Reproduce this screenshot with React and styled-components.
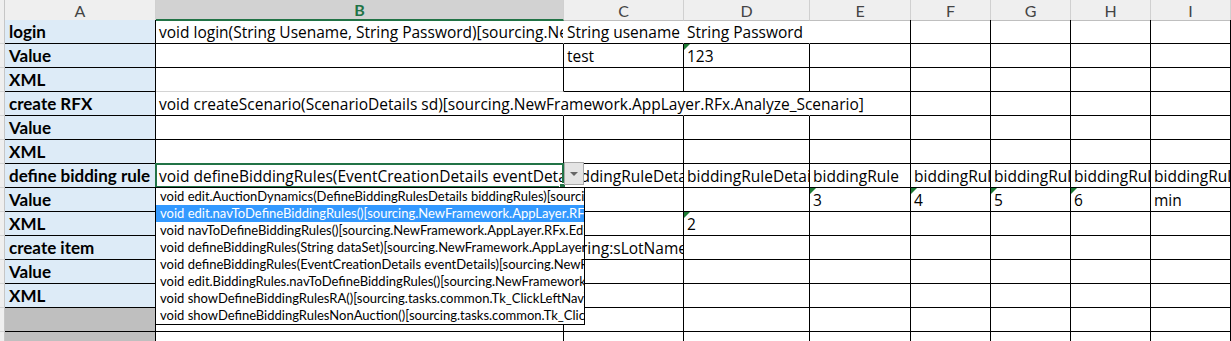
import React from 'react';
import styled, { createGlobalStyle, css } from 'styled-components';

const GlobalStyle = createGlobalStyle`
  html, body {
    margin: 0;
    padding: 0;
    background: #fff;
  }
  body {
    font-family: "Open Sans", "Liberation Sans", sans-serif;
    overflow: hidden;
  }
`;

const COLS = '5px 151px 408px 120px 126px 101px 80px 80px 80px 80px';
const LETTERS = ['A', 'B', 'C', 'D', 'E', 'F', 'G', 'H', 'I'];

const Sheet = styled.div`
    position: relative;
    width: 1231px;
    height: 341px;
    overflow: hidden;
    font-family: "Open Sans", "Liberation Sans", sans-serif;
`;

const Row = styled.div`
    display: grid;
    grid-template-columns: ${COLS};
    height: ${props => props.$h}px;
`;

const Corner = styled.div`
    box-sizing: border-box;
    background: #efefef;
    border-right: 1px solid #c6c6c6;
    border-bottom: 1px solid #bfbfbf;
`;

const ColHead = styled.div`
    box-sizing: border-box;
    display: flex;
    align-items: center;
    justify-content: center;
    font-family: Lato, sans-serif;
    font-size: 16px;
    background: ${props => props.$active ? '#d2d2d2' : '#efefef'};
    color: ${props => props.$active ? '#217346' : '#444'};
    font-weight: ${props => props.$active ? 700 : 400};
    border-right: 1px solid #d0d0d0;
    border-bottom: ${props => props.$active ? '2px solid #217346' : '1px solid #bfbfbf'};
`;

const RowHead = styled.div`
    box-sizing: border-box;
    background: #efefef;
    border-right: 1px solid #c6c6c6;
    border-bottom: 1px solid #d4d4d4;
`;

const Cell = styled.div`
    box-sizing: border-box;
    position: relative;
    display: flex;
    align-items: flex-end;
    padding: 0 3px 2px;
    font-size: 15.5px;
    line-height: 18px;
    color: #000;
    white-space: nowrap;
    overflow: ${props => props.$clip ? 'hidden' : 'visible'};
    background: ${props => props.$fill || 'transparent'};
    border-right: 1px solid ${props => props.$noRight ? 'transparent' : '#000'};
    border-bottom: 1px solid ${props => props.$bottom || '#000'};

    ${props => props.$bold && css`
        font-family: Lato, sans-serif;
        font-weight: 700;
        font-size: 17px;
        padding-left: 4px;
    `}

    ${props => props.$flag && css`
        &::before {
            content: '';
            position: absolute;
            left: 0;
            top: 0;
            border-top: 6px solid #1e7b34;
            border-right: 6px solid transparent;
        }
    `}
`;

const Selection = styled.div`
    position: absolute;
    left: 155px;
    top: 163px;
    width: 409px;
    height: 25px;
    box-sizing: border-box;
    border: 2px solid #217346;
    z-index: 3;

    &::after {
        content: '';
        position: absolute;
        right: -4px;
        bottom: -4px;
        width: 5px;
        height: 5px;
        background: #217346;
        border: 1px solid #fff;
    }
`;

const DropButton = styled.div`
    position: absolute;
    left: 564px;
    top: 162px;
    width: 20px;
    height: 23px;
    box-sizing: border-box;
    background: #e4e4e4;
    border: 1px solid #a9a9a9;
    display: flex;
    align-items: center;
    justify-content: center;
    z-index: 4;

    &::before {
        content: '';
        border-top: 4px solid #666;
        border-left: 4px solid transparent;
        border-right: 4px solid transparent;
    }
`;

const DropList = styled.div`
    position: absolute;
    left: 155px;
    top: 187px;
    width: 430px;
    height: 138px;
    box-sizing: border-box;
    background: #fff;
    border: 1px solid #000;
    overflow: hidden;
    z-index: 5;
`;

const DropItem = styled.div`
    height: 17px;
    line-height: 17px;
    padding-left: 4px;
    font-family: Lato, sans-serif;
    font-size: 13px;
    white-space: nowrap;
    overflow: hidden;
    background: ${props => props.$active ? '#3399ff' : 'transparent'};
    color: ${props => props.$active ? '#fff' : '#000'};
`;

const BLUE = '#ddebf7';
const GRAY = '#bfbfbf';

const blank = () => ({});
const blanks = n => Array.from({ length: n }, blank);

const rows = [
    { label: 'login', cells: [
        { text: 'void login(String Usename, String Password)[sourcing.NewFramework.AppLayer.Login]', clip: true, noRight: true },
        { text: 'String usename', noRight: true },
        { text: 'String Password', noRight: true },
        ...blanks(5),
    ]},
    { label: 'Value', cells: [
        {},
        { text: 'test' },
        { text: '123', flag: true },
        ...blanks(5),
    ]},
    { label: 'XML', cells: [
        { bottom: '#d4d4d4' },
        ...blanks(7),
    ]},
    { label: 'create RFX', cells: [
        { text: 'void createScenario(ScenarioDetails sd)[sourcing.NewFramework.AppLayer.RFx.Analyze_Scenario]', noRight: true },
        { noRight: true },
        { noRight: true },
        ...blanks(5),
    ]},
    { label: 'Value', cells: blanks(8) },
    { label: 'XML', cells: blanks(8) },
    { label: 'define bidding rule', cells: [
        { text: 'void defineBiddingRules(EventCreationDetails eventDetails)[sourcing.NewFramework.AppLayer]', clip: true },
        { text: 'biddingRuleDetails', clip: true },
        { text: 'biddingRuleDetails', clip: true },
        { text: 'biddingRule', clip: true },
        { text: 'biddingRuleDetails', clip: true },
        { text: 'biddingRuleDetails', clip: true },
        { text: 'biddingRuleDetails', clip: true },
        { text: 'biddingRuleDetails', clip: true },
    ]},
    { label: 'Value', cells: [
        ...blanks(3),
        { text: '3', flag: true },
        { text: '4', flag: true },
        { text: '5', flag: true },
        { text: '6', flag: true },
        { text: 'min' },
    ]},
    { label: 'XML', cells: [
        ...blanks(2),
        { text: '2', flag: true },
        ...blanks(5),
    ]},
    { label: 'create item', cells: [
        {},
        { text: 'String:sLotName', clip: true },
        ...blanks(6),
    ]},
    { label: 'Value', cells: blanks(8) },
    { label: 'XML', cells: blanks(8) },
    { label: '', fill: GRAY, cells: blanks(8) },
    { label: '', fill: GRAY, cells: blanks(8) },
];

const options = [
    'void edit.AuctionDynamics(DefineBiddingRulesDetails biddingRules)[sourcing.NewFramework.AppLayer]',
    'void edit.navToDefineBiddingRules()[sourcing.NewFramework.AppLayer.RFx.Edit]',
    'void navToDefineBiddingRules()[sourcing.NewFramework.AppLayer.RFx.Edit]',
    'void defineBiddingRules(String dataSet)[sourcing.NewFramework.AppLayer.RFx]',
    'void defineBiddingRules(EventCreationDetails eventDetails)[sourcing.NewFramework.AppLayer]',
    'void edit.BiddingRules.navToDefineBiddingRules()[sourcing.NewFramework.AppLayer]',
    'void showDefineBiddingRulesRA()[sourcing.tasks.common.Tk_ClickLeftNav]',
    'void showDefineBiddingRulesNonAuction()[sourcing.tasks.common.Tk_ClickLeftNav]',
];

const App = () => {
    return (
        <>
            <GlobalStyle />
            <Sheet>
                <Row $h={20}>
                    <Corner />
                    {LETTERS.map(l => (
                        <ColHead key={l} $active={l === 'B'}>{l}</ColHead>
                    ))}
                </Row>
                {rows.map((row, i) => (
                    <Row key={i} $h={24}>
                        <RowHead />
                        <Cell $fill={row.fill || BLUE} $bold>{row.label}</Cell>
                        {row.cells.map((c, j) => (
                            <Cell
                                key={j}
                                $clip={c.clip}
                                $noRight={c.noRight}
                                $bottom={c.bottom}
                                $flag={c.flag}
                            >
                                {c.text}
                            </Cell>
                        ))}
                    </Row>
                ))}
                <Selection />
                <DropButton />
                <DropList>
                    {options.map((o, i) => (
                        <DropItem key={i} $active={i === 1}>{o}</DropItem>
                    ))}
                </DropList>
            </Sheet>
        </>
    );
};

export default App;
